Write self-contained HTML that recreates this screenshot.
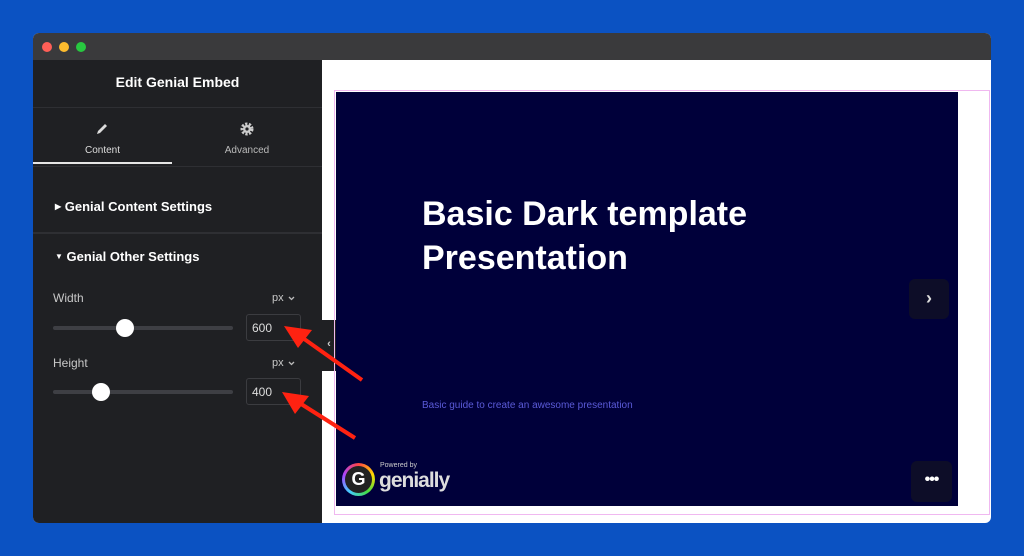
<!DOCTYPE html>
<html><head><style>
*{margin:0;padding:0;box-sizing:border-box}
body{width:1024px;height:556px;background:#0b52c2;font-family:"Liberation Sans",sans-serif;position:relative;overflow:hidden}
.a{position:absolute}
.win{left:33px;top:33px;width:958px;height:490px;border-radius:6px;overflow:hidden;background:#fff}
.tb{left:0;top:0;width:958px;height:27px;background:#3a3a3c}
.dot{width:10px;height:10px;border-radius:50%;top:9px}
.side{left:0;top:27px;width:289px;height:463px;background:#1f2023;color:#fff}
.sep{left:0;width:289px;height:1px;background:#2e2f33}
.lbl{font-size:12px;color:#c8c8c8}
.track{height:4px;background:#3e3f44;border-radius:2px;width:180px;left:20px}
.knob{width:18px;height:18px;border-radius:50%;background:#fff}
.inp{width:55px;height:27px;border:1px solid #3b3c40;border-radius:3px;font-size:12px;color:#ddd;padding:6px 5px}
</style></head><body>
<div class="a win">
 <div class="a tb">
  <div class="a dot" style="left:9px;background:#ff5f57"></div>
  <div class="a dot" style="left:26px;background:#febc2e"></div>
  <div class="a dot" style="left:43px;background:#28c840"></div>
 </div>
 <div class="a side">
  <div class="a" style="left:0;width:289px;top:14px;text-align:center;font-weight:bold;font-size:14px">Edit Genial Embed</div>
  <div class="a sep" style="top:47px"></div>
  <svg class="a" style="left:62px;top:62px" width="14" height="14" viewBox="0 0 14 14"><path d="M2 12 L3 9 L10 2 L12 4 L5 11 Z" fill="#ddd"/></svg>
  <div class="a" style="left:0;width:139px;top:85px;text-align:center;font-size:10px;color:#ddd">Content</div>
  <svg class="a" style="left:206px;top:61px" width="16" height="16" viewBox="0 0 16 16"><circle cx="8" cy="8" r="5" fill="none" stroke="#ccc" stroke-width="3" stroke-dasharray="2.2 1.4"/><circle cx="8" cy="8" r="4" fill="#ccc"/><circle cx="8" cy="8" r="1.6" fill="#1f2023"/></svg>
  <div class="a" style="left:144px;width:140px;top:85px;text-align:center;font-size:10px;color:#bbb">Advanced</div>
  <div class="a" style="left:0;top:102px;width:139px;height:2px;background:#e5e5e5"></div>
  <div class="a sep" style="top:106px"></div>
  <div class="a" style="left:22px;top:139px;font-size:13px;font-weight:bold"><span style="font-size:8px;vertical-align:2px">▶</span> Genial Content Settings</div>
  <div class="a sep" style="top:172px;height:2px"></div>
  <div class="a" style="left:22px;top:189px;font-size:13px;font-weight:bold"><span style="font-size:8px;vertical-align:2px">▼</span> Genial Other Settings</div>
  <div class="a lbl" style="left:20px;top:231px">Width</div>
  <div class="a lbl" style="left:239px;top:232px;font-size:11px">px</div>
  <svg class="a" style="left:255px;top:236px" width="7" height="5"><path d="M1 1 L3.5 3.5 L6 1" stroke="#bbb" fill="none" stroke-width="1.3"/></svg>
  <div class="a track" style="top:266px"></div>
  <div class="a knob" style="left:83px;top:259px"></div>
  <div class="a inp" style="left:213px;top:254px">600</div>
  <div class="a lbl" style="left:20px;top:296px">Height</div>
  <div class="a lbl" style="left:239px;top:297px;font-size:11px">px</div>
  <svg class="a" style="left:255px;top:301px" width="7" height="5"><path d="M1 1 L3.5 3.5 L6 1" stroke="#bbb" fill="none" stroke-width="1.3"/></svg>
  <div class="a track" style="top:330px"></div>
  <div class="a knob" style="left:59px;top:323px"></div>
  <div class="a inp" style="left:213px;top:318px">400</div>
 </div>
 <div class="a" style="left:289px;top:287px;width:14px;height:51px;background:#1f2023;color:#ccc;font-size:11px;padding-top:18px;text-align:center;font-weight:bold">‹</div>
 <div class="a" style="left:301px;top:57px;width:656px;height:425px;border:1px solid #f0b8f0"></div>
 <div class="a" style="left:303px;top:59px;width:622px;height:414px;background:#00003a">
  <div class="a" style="left:86px;top:100px;font-size:34px;font-weight:bold;color:#fff;line-height:44px">Basic Dark template<br>Presentation</div>
  <div class="a" style="left:86px;top:308px;font-size:10px;color:#5a5ad8">Basic guide to create an awesome presentation</div>
  <div class="a" style="left:573px;top:187px;width:40px;height:40px;border-radius:6px;background:#0d0d28;color:#ddd;text-align:center;font-size:18px;line-height:38px;font-weight:bold">›</div>
  <div class="a" style="left:575px;top:369px;width:41px;height:41px;border-radius:6px;background:#0d0d28;color:#fff;text-align:center;font-size:16px;line-height:38px;font-weight:bold;letter-spacing:-1px">•••</div>
  <div class="a" style="left:6px;top:371px;width:33px;height:33px;border-radius:50%;background:conic-gradient(#f44,#fd0,#4d4,#4cf,#a4f,#f44);"><div class="a" style="left:3px;top:3px;width:27px;height:27px;border-radius:50%;background:#222;color:#fff;font-weight:bold;font-size:18px;text-align:center;line-height:27px">G</div></div>
  <div class="a" style="left:44px;top:370px;font-size:7px;color:#ccc">Powered by</div>
  <div class="a" style="left:43px;top:377px;font-size:21px;color:#ddd;font-weight:bold;letter-spacing:-1px">genially</div>
 </div>
</div>
<svg class="a" style="left:0;top:0" width="1024" height="556">
 <line x1="362" y1="380" x2="300" y2="336" stroke="#f21" stroke-width="4"/>
 <polygon points="284,326 312,330 298,348" fill="#f21"/>
 <line x1="355" y1="438" x2="298" y2="402" stroke="#f21" stroke-width="4"/>
 <polygon points="282,392 309,396 295,414" fill="#f21"/>
</svg>
</body></html>
